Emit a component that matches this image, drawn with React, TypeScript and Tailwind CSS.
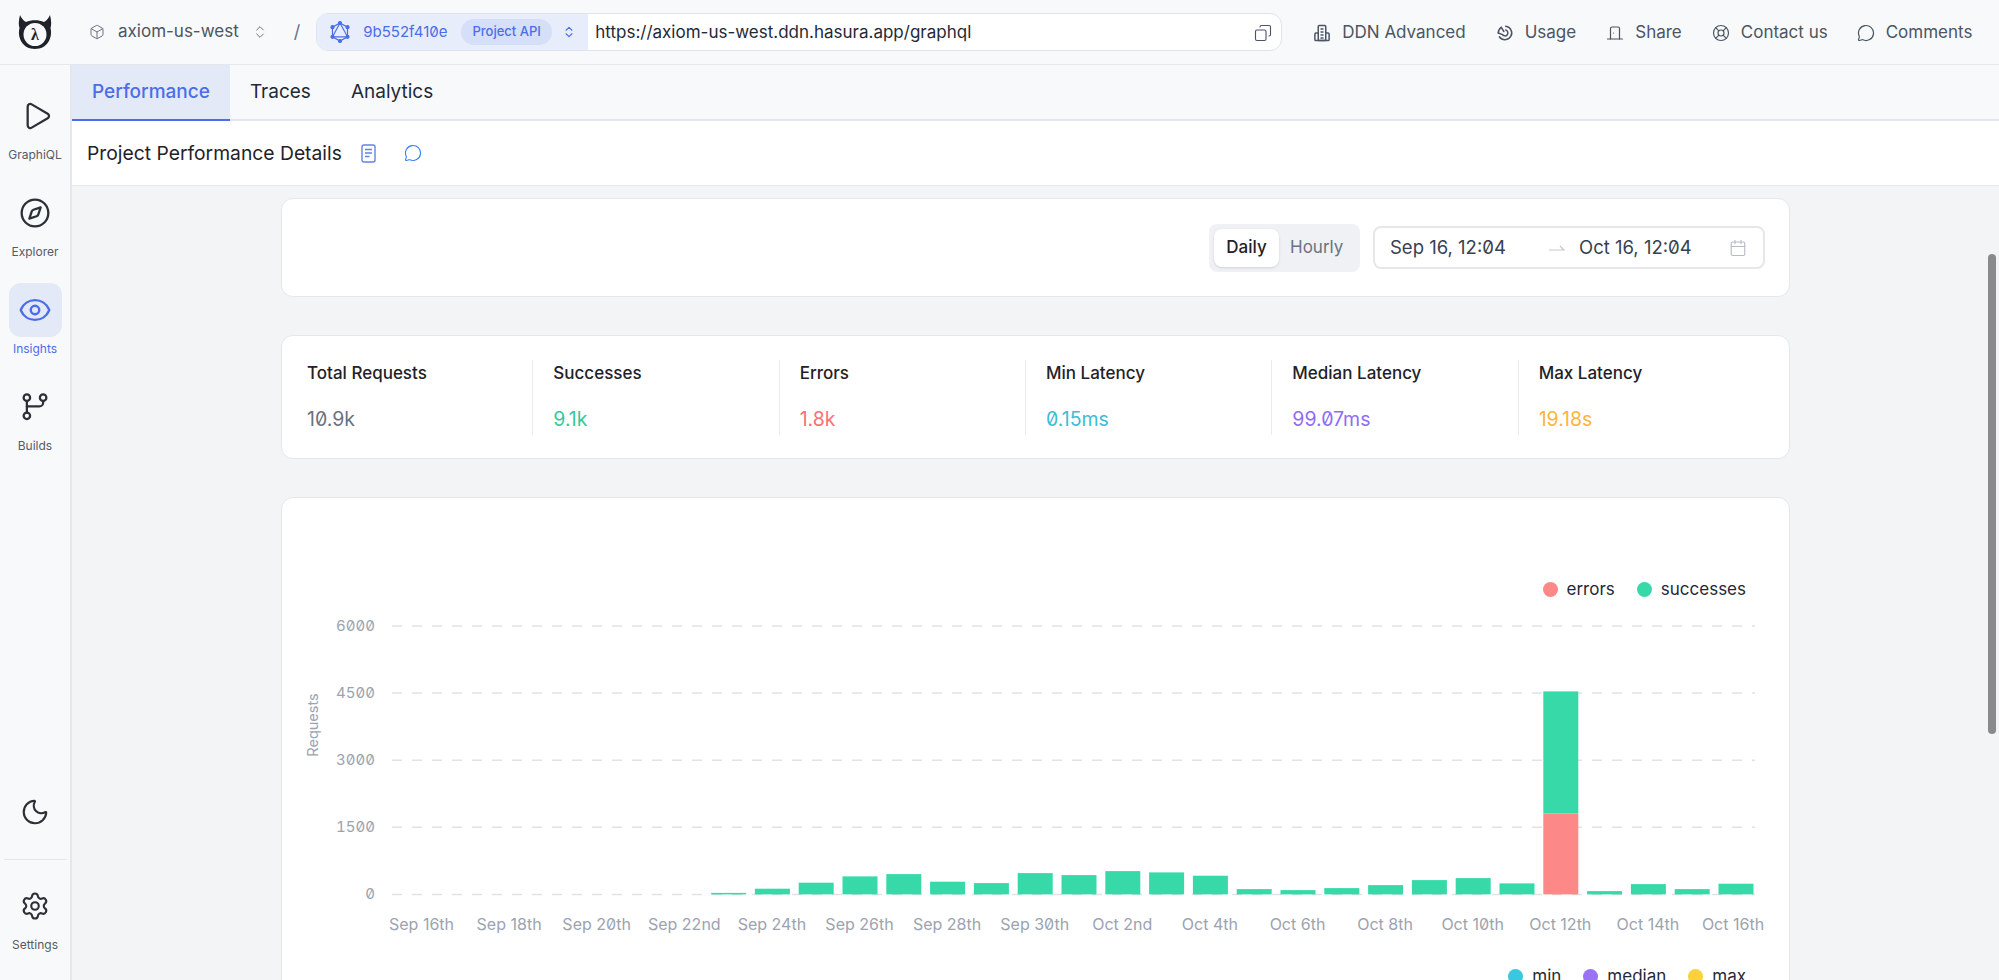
import {
  Box,
  Calendar,
  ChevronsUpDown,
  Compass,
  Copy,
  DoorClosed,
  Eye,
  LifeBuoy,
  MessageCircle,
  Moon,
  Play,
  Settings,
} from "lucide-react";

const fontClass = "font-['Inter','Noto_Sans',sans-serif] slashed-zero";

const heights = [0, 0, 0, 0, 0, 0, 0, 1.5, 5.7, 11.7, 18, 20.3, 12.7, 11.3, 21.3, 19.3, 23.3, 22, 18.7, 5.3, 4.3, 6.3, 9.3, 14.3, 16.3, 11, 203, 3.3, 10.3, 5.3, 10.7];
const dates = ["Sep 16th", "Sep 18th", "Sep 20th", "Sep 22nd", "Sep 24th", "Sep 26th", "Sep 28th", "Sep 30th", "Oct 2nd", "Oct 4th", "Oct 6th", "Oct 8th", "Oct 10th", "Oct 12th", "Oct 14th", "Oct 16th"];
const ticks = ["6000", "4500", "3000", "1500", "0"];

const stats = [
  { label: "Total Requests", value: "10.9k", color: "text-[#6b7280]" },
  { label: "Successes", value: "9.1k", color: "text-[#34c99a]" },
  { label: "Errors", value: "1.8k", color: "text-[#fb7075]" },
  { label: "Min Latency", value: "0.15ms", color: "text-[#3cbcd6]" },
  { label: "Median Latency", value: "99.07ms", color: "text-[#8f6cf6]" },
  { label: "Max Latency", value: "19.18s", color: "text-[#fbb53c]" },
];

const HasuraLogo = () => (
  <svg width="36" height="36" viewBox="0 0 36 36" className="shrink-0">
    <path d="M3 1 C4.5 4 6 6.5 9 8 C14 5.5 22 5.5 27 8 C30 6.5 31.5 4 33 1 C34.5 7 34.5 11 33.5 14 C36 24 30 35 18 35 C6 35 0 24 2.5 14 C1.5 11 1.5 7 3 1 Z" fill="#1f2228" />
    <circle cx="18" cy="20.5" r="11.5" fill="#f8f9fb" />
    <text x="18" y="25.5" textAnchor="middle" fontSize="16" fontWeight="700" fontFamily="Liberation Serif, serif" fill="#1f2228">λ</text>
  </svg>
);

const GraphqlIcon = () => (
  <svg width="22" height="24" viewBox="0 0 22 24" fill="none" stroke="#4a6ee8" strokeWidth="1.2" className="shrink-0">
    <path d="M11 3 L18.5 7.2 V16.8 L11 21 L3.5 16.8 V7.2 Z" />
    <path d="M11 3 L18.5 16.8 H3.5 Z" />
    <circle cx="11" cy="3" r="1.5" fill="#4a6ee8" />
    <circle cx="11" cy="21" r="1.5" fill="#4a6ee8" />
    <circle cx="3.5" cy="7.2" r="1.5" fill="#4a6ee8" />
    <circle cx="18.5" cy="7.2" r="1.5" fill="#4a6ee8" />
    <circle cx="3.5" cy="16.8" r="1.5" fill="#4a6ee8" />
    <circle cx="18.5" cy="16.8" r="1.5" fill="#4a6ee8" />
  </svg>
);

const BranchIcon = () => (
  <svg width="30" height="30" viewBox="0 0 24 24" fill="none" stroke="#2b2f36" strokeWidth="1.8" strokeLinecap="round">
    <circle cx="5.5" cy="4.5" r="2.6" />
    <circle cx="18.5" cy="4.5" r="2.6" />
    <circle cx="5.5" cy="19" r="2.6" />
    <path d="M5.5 7.2 V16.4" />
    <path d="M18.5 7.2 V8.5 A3 3 0 0 1 15.5 11.5 H5.5" />
  </svg>
);

const BuildingIcon = () => (
  <svg width="18" height="18" viewBox="0 0 24 24" fill="none" stroke="currentColor" strokeWidth="2" strokeLinejoin="round">
    <rect x="7" y="2" width="10" height="20" rx="1.5" />
    <path d="M7 12 H4 A1.5 1.5 0 0 0 2.5 13.5 V20.5 A1.5 1.5 0 0 0 4 22 H20 A1.5 1.5 0 0 0 21.5 20.5 V13.5 A1.5 1.5 0 0 0 20 12 H17" />
    <path d="M10 6.5 H14 M10 10.5 H14 M10 14.5 H14 M10 18.5 H14" />
  </svg>
);

const UsageIcon = () => (
  <svg width="18" height="18" viewBox="0 0 24 24" fill="none" stroke="currentColor" strokeWidth="2" strokeLinecap="round">
    <path d="M13 3 A9 9 0 1 1 4.5 17" />
    <path d="M3 12 A9 9 0 0 1 7 4.5" />
    <path d="M13 8 A4 4 0 1 1 8.5 14 L3 12" />
    <path d="M7 4.5 L10.5 10" />
  </svg>
);

const DocIcon = () => (
  <svg width="15" height="19" viewBox="0 0 15 19" fill="none" stroke="#5f83ec" strokeWidth="1.4" className="ml-[19px]">
    <rect x="1" y="1" width="13" height="17" rx="2" />
    <path d="M4 5.5 H11 M4 9 H11 M4 12.5 H8.5" />
  </svg>
);

const NavItem = ({ icon, label, active }: { icon: React.ReactNode; label: string; active?: boolean }) => (
  <div className="flex h-[97px] flex-col items-center">
    <div className={`flex h-[54px] w-[53px] items-center justify-center rounded-xl ${active ? "bg-[#e4e9f7]" : ""}`}>{icon}</div>
    <span className={`mt-[4px] text-xs leading-4 ${active ? "text-[#4a6ee8]" : "text-[#555b66]"}`}>{label}</span>
  </div>
);

const TopLink = ({ icon, label, className }: { icon: React.ReactNode; label: string; className: string }) => (
  <div className={`flex items-center gap-[11px] pt-px text-[17px] text-[#4b5563] ${className}`}>
    {icon}
    <span>{label}</span>
  </div>
);

const LegendDot = ({ color, label }: { color: string; label: string }) => (
  <div className="flex items-center gap-[9px]">
    <span className={`h-[15px] w-[15px] rounded-full ${color}`} />
    <span className="text-[17px] leading-5 text-[#1f2937]">{label}</span>
  </div>
);

const Chart = () => (
  <svg width="1508" height="340" className="mt-[7px] block">
    {ticks.map((tick, i) => {
      const y = 20 + i * 67.1;
      return (
        <g key={tick}>
          <line x1="110" x2="1473" y1={y} y2={y} stroke="#dfe2e6" strokeWidth="1.5" strokeDasharray="10 10" />
          <text x="93" y={y + 5} textAnchor="end" fontSize="15" fill="#9ca3af" fontFamily="Inter, sans-serif" style={{ fontVariantNumeric: "slashed-zero tabular-nums" }}>
            {tick}
          </text>
        </g>
      );
    })}
    <text transform="translate(36 119) rotate(-90)" textAnchor="middle" fontSize="14.5" fill="#9ca3af" fontFamily="Inter, sans-serif">
      Requests
    </text>
    {heights.map((h, i) => {
      if (!h) return null;
      const x = 140 + i * 43.8 - 17.5;
      if (i === 26) {
        return (
          <g key={i}>
            <rect x={x} y={288.4 - 203} width="35" height="122" fill="#38d9a9" />
            <rect x={x} y={288.4 - 81} width="35" height="81" fill="#fd8888" />
          </g>
        );
      }
      return <rect key={i} x={x} y={288.4 - h} width="35" height={h} fill="#38d9a9" />;
    })}
    {dates.map((d, i) => (
      <text key={d} x={i === 15 ? 1451 : 139.5 + i * 87.6} y="324" textAnchor="middle" fontSize="16" fill="#9ca3af" fontFamily="Inter, sans-serif" style={{ fontVariantNumeric: "slashed-zero" }}>
        {d}
      </text>
    ))}
  </svg>
);

const App = () => {
  return (
    <div className={`flex h-screen flex-col overflow-hidden bg-[#f3f4f6] ${fontClass}`}>
      <header className="flex h-[65px] shrink-0 items-center border-b border-[#e5e7eb] bg-[#f8f9fb]">
        <div className="ml-[17px] mr-[36px]">
          <HasuraLogo />
        </div>
        <Box size={16} className="text-[#6b7280]" strokeWidth={1.5} />
        <span className="ml-[13px] text-[17px] text-[#4b5563]">axiom-us-west</span>
        <ChevronsUpDown size={16} className="ml-[13px] text-[#6b7280]" strokeWidth={1.5} />
        <span className="ml-[26px] mr-[16px] text-lg text-[#6b7280]">/</span>
        <div className="flex h-[38px] w-[966px] items-stretch overflow-hidden rounded-xl border border-[#dfe3ee] bg-white">
          <div className="flex w-[271px] items-center bg-[#e8edfb] pl-[12px] text-[#4a6ee8]">
            <GraphqlIcon />
            <span className="ml-[12px] text-[15px]">9b552f410e</span>
            <span className="ml-[14px] rounded-full bg-[#d6dff8] px-[11px] py-[3px] text-[13px] font-medium">Project API</span>
            <ChevronsUpDown size={14} className="ml-[10px]" />
          </div>
          <div className="flex flex-1 items-center justify-between pl-[7px] pr-[9px] pt-px text-[17px] text-[#1f2937]">
            <span>https://axiom-us-west.ddn.hasura.app/graphql</span>
            <Copy size={18} className="-scale-x-100 text-[#4b5563]" strokeWidth={1.5} />
          </div>
        </div>
        <TopLink className="ml-[31px]" icon={<BuildingIcon />} label="DDN Advanced" />
        <TopLink className="ml-[30px]" icon={<UsageIcon />} label="Usage" />
        <TopLink className="ml-[30px]" icon={<DoorClosed size={18} strokeWidth={1.6} />} label="Share" />
        <TopLink className="ml-[30px]" icon={<LifeBuoy size={18} strokeWidth={1.6} />} label="Contact us" />
        <TopLink className="ml-[29px]" icon={<MessageCircle size={18} strokeWidth={1.6} />} label="Comments" />
      </header>

      <div className="flex min-h-0 flex-1">
        <aside className="flex w-[72px] shrink-0 flex-col items-center border-r-2 border-[#e5e7eb] bg-[#f8f9fb] pt-[24px]">
          <NavItem icon={<Play size={32} strokeWidth={1.7} className="ml-1 text-[#2b2f36]" />} label="GraphiQL" />
          <NavItem icon={<Compass size={32} strokeWidth={1.7} className="text-[#2b2f36]" />} label="Explorer" />
          <NavItem active icon={<Eye size={34} strokeWidth={1.7} className="text-[#4a6ee8]" />} label="Insights" />
          <NavItem icon={<BranchIcon />} label="Builds" />
          <div className="mt-auto flex h-[54px] items-center">
            <Moon size={30} strokeWidth={1.7} className="text-[#2b2f36]" />
          </div>
          <div className="mt-[20px] h-px w-[63px] bg-[#e5e7eb]" />
          <div className="mt-[31px] mb-[27px] flex flex-col items-center">
            <Settings size={30} strokeWidth={1.7} className="text-[#2b2f36]" />
            <span className="mt-[16px] text-xs leading-4 text-[#555b66]">Settings</span>
          </div>
        </aside>

        <main className="relative flex min-w-0 flex-1 flex-col">
          <nav className="flex h-[56px] shrink-0 border-b-2 border-[#e2e5ea] bg-[#f8f9fb] text-[19px]">
            <div className="-mb-[2px] flex items-center border-b-2 border-[#4a6ee8] bg-[#e4e9f7] px-5 pt-px font-medium text-[#4a6ee8]">Performance</div>
            <div className="flex items-center px-5 pt-px text-[#1f2937]">Traces</div>
            <div className="flex items-center px-5 pt-px text-[#1f2937]">Analytics</div>
          </nav>
          <div className="flex h-[65px] shrink-0 items-center border-b border-[#e5e7eb] bg-white pl-[15px]">
            <h2 className="text-[19.3px] text-[#1f2228]">Project Performance Details</h2>
            <DocIcon />
            <MessageCircle size={18} strokeWidth={1.5} className="ml-[28px] text-[#3b82f6]" />
          </div>

          <div className="flex flex-1 flex-col gap-[38px] overflow-hidden px-[209px] pt-[12px]">
            <section className="flex h-[99px] shrink-0 items-center justify-end rounded-xl border border-[#e5e7eb] bg-white pr-[24px]">
              <div className="flex h-[48px] w-[151px] items-center rounded-lg bg-[#eff1f4] px-[5px] text-[17px]">
                <span className="flex h-[38px] w-[65px] items-center justify-center rounded-lg bg-white font-medium text-[#1f2228] shadow-sm">Daily</span>
                <span className="ml-[11px] text-[#6b7280]">Hourly</span>
              </div>
              <div className="ml-[13px] flex h-[43px] w-[392px] items-center rounded-lg border-2 border-[#e5e7eb] pl-[15px] pr-[16px] text-[18.5px] text-[#374151]">
                <span className="w-[159px]">Sep 16, 12:04</span>
                <svg width="16" height="8" viewBox="0 0 16 8" fill="none" stroke="#c4c8cf" strokeWidth="1.2">
                  <path d="M0 6 H15 L11 2" />
                </svg>
                <span className="ml-[14px]">Oct 16, 12:04</span>
                <Calendar size={18} strokeWidth={1.5} className="ml-auto text-[#b6bbc4]" />
              </div>
            </section>

            <section className="grid h-[124px] shrink-0 grid-cols-6 items-center rounded-xl border border-[#e5e7eb] bg-white pl-[5px] pr-[24px]">
              {stats.map((s, i) => (
                <div key={s.label} className={`flex h-[75px] flex-col pl-[20px] ${i < 5 ? "border-r border-[#e9ebee]" : ""}`}>
                  <span className="-mt-px text-[17px] font-medium leading-[28px] text-[#1f2228]">{s.label}</span>
                  <span className={`mt-[18px] text-[19.5px] leading-[28px] ${s.color}`}>{s.value}</span>
                </div>
              ))}
            </section>

            <section className="h-[600px] shrink-0 rounded-xl border border-[#e5e7eb] bg-white">
              <div className="mt-[81px] flex justify-end gap-[22px] pr-[43px]">
                <LegendDot color="bg-[#fd8888]" label="errors" />
                <LegendDot color="bg-[#38d9a9]" label="successes" />
              </div>
              <Chart />
              <div className="mt-[20px] flex justify-end gap-[22px] pr-[43px]">
                <LegendDot color="bg-[#38c9e0]" label="min" />
                <LegendDot color="bg-[#9b72f5]" label="median" />
                <LegendDot color="bg-[#fdd13c]" label="max" />
              </div>
            </section>
          </div>

          <div className="absolute top-[189px] right-[3px] h-[480px] w-[8px] rounded-full bg-[#8a8a8a]" />
        </main>
      </div>
    </div>
  );
};

export default App;
